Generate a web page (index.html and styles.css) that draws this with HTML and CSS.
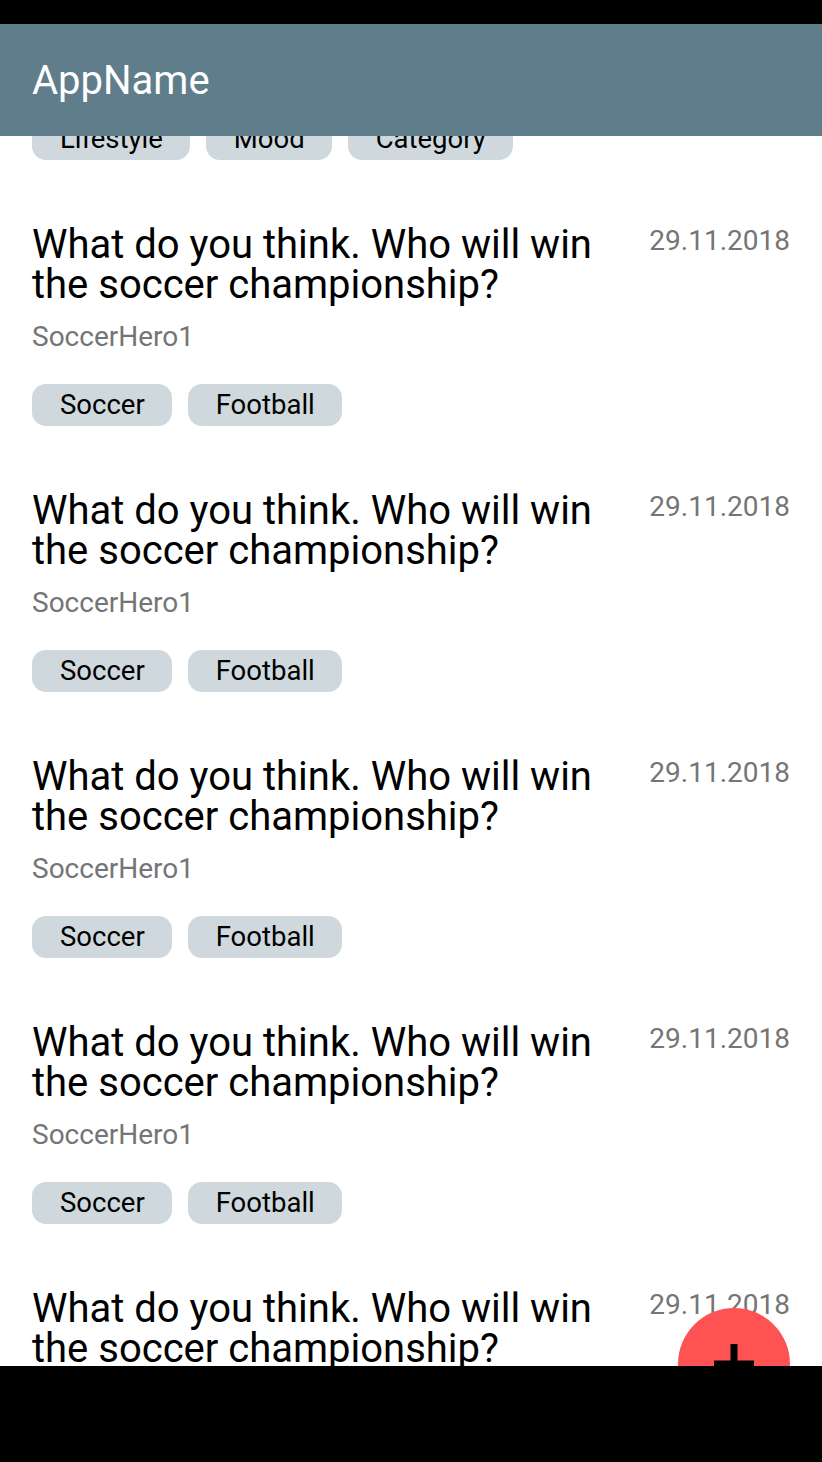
FILE: index.html
```html
<!DOCTYPE html>
<html lang="en">
<head>
<meta charset="utf-8">
<title>AppName</title>
<link rel="stylesheet" href="styles.css">
</head>
<body>
<div class="screen">
  <div class="status-bar"></div>
  <header class="app-bar"><h1 class="app-title">AppName</h1></header>
  <main class="viewport">
    <ul class="list">
      <li class="item item-partial">
        <div class="tags">
          <span class="tag">Lifestyle</span>
          <span class="tag">Mood</span>
          <span class="tag">Category</span>
        </div>
      </li>
      <li class="item">
        <div class="item-head">
          <div class="item-main">
            <h2 class="item-title">What do you think. Who will win the soccer championship?</h2>
            <div class="item-author">SoccerHero1</div>
          </div>
          <div class="item-date">29.11.2018</div>
        </div>
        <div class="tags"><span class="tag">Soccer</span><span class="tag">Football</span></div>
      </li>
      <li class="item">
        <div class="item-head">
          <div class="item-main">
            <h2 class="item-title">What do you think. Who will win the soccer championship?</h2>
            <div class="item-author">SoccerHero1</div>
          </div>
          <div class="item-date">29.11.2018</div>
        </div>
        <div class="tags"><span class="tag">Soccer</span><span class="tag">Football</span></div>
      </li>
      <li class="item">
        <div class="item-head">
          <div class="item-main">
            <h2 class="item-title">What do you think. Who will win the soccer championship?</h2>
            <div class="item-author">SoccerHero1</div>
          </div>
          <div class="item-date">29.11.2018</div>
        </div>
        <div class="tags"><span class="tag">Soccer</span><span class="tag">Football</span></div>
      </li>
      <li class="item">
        <div class="item-head">
          <div class="item-main">
            <h2 class="item-title">What do you think. Who will win the soccer championship?</h2>
            <div class="item-author">SoccerHero1</div>
          </div>
          <div class="item-date">29.11.2018</div>
        </div>
        <div class="tags"><span class="tag">Soccer</span><span class="tag">Football</span></div>
      </li>
      <li class="item">
        <div class="item-head">
          <div class="item-main">
            <h2 class="item-title">What do you think. Who will win the soccer championship?</h2>
            <div class="item-author">SoccerHero1</div>
          </div>
          <div class="item-date">29.11.2018</div>
        </div>
        <div class="tags"><span class="tag">Soccer</span><span class="tag">Football</span></div>
      </li>
    </ul>
    <button class="fab" aria-label="Add">
      <svg class="fab-icon" width="40" height="40" viewBox="0 0 40 40"><rect x="16.5" y="0" width="7" height="40" fill="#000"/><rect x="0" y="16.5" width="40" height="7" fill="#000"/></svg>
    </button>
  </main>
  <div class="nav-bar"></div>
</div>
</body>
</html>
```

FILE: styles.css
```css
* { box-sizing: border-box; }
html, body { margin: 0; padding: 0; background: #000; }
body { font-family: Roboto, "Liberation Sans", sans-serif; }

.screen {
  width: 822px;
  height: 1462px;
  display: flex;
  flex-direction: column;
  background: #fff;
  overflow: hidden;
}

.status-bar { height: 24px; background: #000; flex: none; }

.app-bar {
  height: 112px;
  flex: none;
  background: #607d8b;
  display: flex;
  align-items: center;
  padding: 0 32px;
  position: relative;
  z-index: 2;
}
.app-title {
  margin: 0;
  font-size: 40px;
  font-weight: 400;
  color: #fff;
}

.viewport {
  height: 1230px;
  flex: none;
  overflow: hidden;
  position: relative;
  background: #fff;
}

.list {
  list-style: none;
  margin: -18px 0 0;
  padding: 0;
}

.item {
  padding: 32px;
}
.item-partial { padding-top: 0; }

.item-head {
  display: flex;
  gap: 32px;
  align-items: flex-start;
}
.item-main { flex: 1; min-width: 0; }

.item-title {
  margin: 0;
  padding-top: 1px;
  font-size: 40px;
  font-weight: 400;
  line-height: 40px;
  color: #000;
}
.item-author {
  margin-top: 15px;
  font-size: 28px;
  line-height: 33px;
  color: #757575;
}
.item-date {
  flex: none;
  margin-top: 3px;
  font-size: 28px;
  line-height: 28px;
  color: #757575;
}

.tags {
  display: flex;
  gap: 16px;
  margin-top: 31px;
}
.item-partial .tags { margin-top: 0; }
.tag {
  height: 42px;
  line-height: 42px;
  padding: 0 27px 0 28px;
  border-radius: 14px;
  background: #cfd8dc;
  color: #000;
  font-size: 27.5px;
}

.fab {
  position: absolute;
  right: 32px;
  top: 1172px;
  width: 112px;
  height: 112px;
  border-radius: 50%;
  border: none;
  padding: 0;
  background: #ff5252;
  display: flex;
  align-items: center;
  justify-content: center;
}
.fab-icon { display: block; }

.nav-bar { height: 96px; background: #000; flex: none; }
```
